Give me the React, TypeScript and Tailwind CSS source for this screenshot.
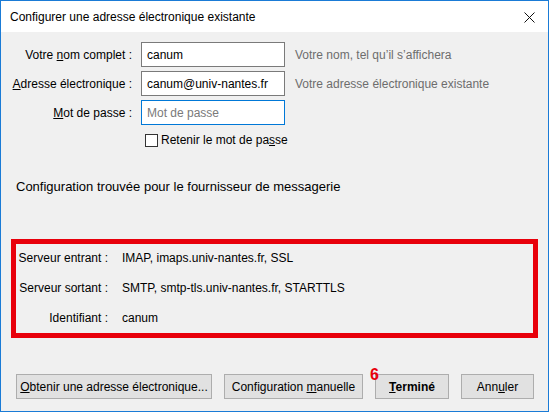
export default function App() {
  return (
    <div className="w-[549px] h-[412px] border border-[#1a7bd6] bg-[#f0f0f0] flex flex-col text-[12px] text-black font-['Liberation_Sans',Arial,sans-serif] overflow-hidden">
      {/* Title bar */}
      <div className="h-[31px] bg-white flex items-center justify-between pl-[9px] pr-[13px] flex-shrink-0">
        <span className="text-[12px]">Configurer une adresse électronique existante</span>
        <svg width="11" height="11" viewBox="0 0 11 11" className="mt-[1px]">
          <path d="M0.5 0.5 L10.5 10.5 M10.5 0.5 L0.5 10.5" stroke="#111" strokeWidth="1" />
        </svg>
      </div>

      {/* Form */}
      <div className="flex flex-col gap-[4px] mt-[10px]">
        <div className="flex items-center h-[25px]">
          <span className="w-[131px] text-right">Votre <u>n</u>om complet :</span>
          <div className="ml-[9px] w-[144px] h-[25px] bg-white border border-[#7a7a7a] flex items-center px-[5px]">canum</div>
          <span className="ml-[10px] text-[#6d6d6d]">Votre nom, tel qu’il s’affichera</span>
        </div>
        <div className="flex items-center h-[25px]">
          <span className="w-[131px] text-right"><u>A</u>dresse électronique :</span>
          <div className="ml-[9px] w-[144px] h-[25px] bg-white border border-[#7a7a7a] flex items-center px-[5px]">canum@univ-nantes.fr</div>
          <span className="ml-[10px] text-[#6d6d6d]">Votre adresse électronique existante</span>
        </div>
        <div className="flex items-center h-[25px]">
          <span className="w-[131px] text-right"><u>M</u>ot de passe :</span>
          <div className="ml-[9px] w-[144px] h-[25px] bg-white border border-[#0078d7] flex items-center px-[5px] text-[#7a7a7a]">Mot de passe</div>
        </div>
      </div>
      <div className="flex items-center h-[18px] mt-[6px] ml-[144px]">
        <div className="w-[13px] h-[13px] bg-white border border-[#333]" />
        <span className="ml-[3px]">Retenir le mot de pa<u>s</u>se</span>
      </div>

      <div className="ml-[15px] mt-[28px] text-[13px] leading-[19px]">Configuration trouvée pour le fournisseur de messagerie</div>

      {/* Found configuration */}
      <div className="ml-[10px] mt-[43px] w-[527px] h-[99px] border-[5px] border-[#e8000b] flex flex-col pt-[5px] gap-[12px] flex-shrink-0">
        <div className="flex items-center h-[18px]">
          <span className="w-[92px] text-right">Serveur entrant :</span>
          <span className="ml-[14px]">IMAP, imaps.univ-nantes.fr, SSL</span>
        </div>
        <div className="flex items-center h-[18px]">
          <span className="w-[92px] text-right">Serveur sortant :</span>
          <span className="ml-[14px]">SMTP, smtp-tls.univ-nantes.fr, STARTTLS</span>
        </div>
        <div className="flex items-center h-[18px]">
          <span className="w-[92px] text-right">Identifiant :</span>
          <span className="ml-[14px]">canum</span>
        </div>
      </div>

      {/* Buttons */}
      <div className="flex items-center mt-[36px] ml-[15px]">
        <button className="w-[196px] h-[25px] bg-[#e1e1e1] border border-[#adadad]"><u>O</u>btenir une adresse électronique...</button>
        <button className="ml-[12px] w-[139px] h-[25px] bg-[#e1e1e1] border border-[#adadad]">Configuration <u>m</u>anuelle</button>
        <div className="relative ml-[12px]">
          <span className="absolute left-[-5px] top-[-7px] text-[16px] font-bold text-[#e8000b] leading-none">6</span>
          <button className="w-[74px] h-[25px] bg-[#e1e1e1] border border-[#adadad] font-bold"><u>T</u>erminé</button>
        </div>
        <button className="ml-[12px] w-[73px] h-[25px] bg-[#e1e1e1] border border-[#adadad]">Ann<u>u</u>ler</button>
      </div>
    </div>
  );
}
